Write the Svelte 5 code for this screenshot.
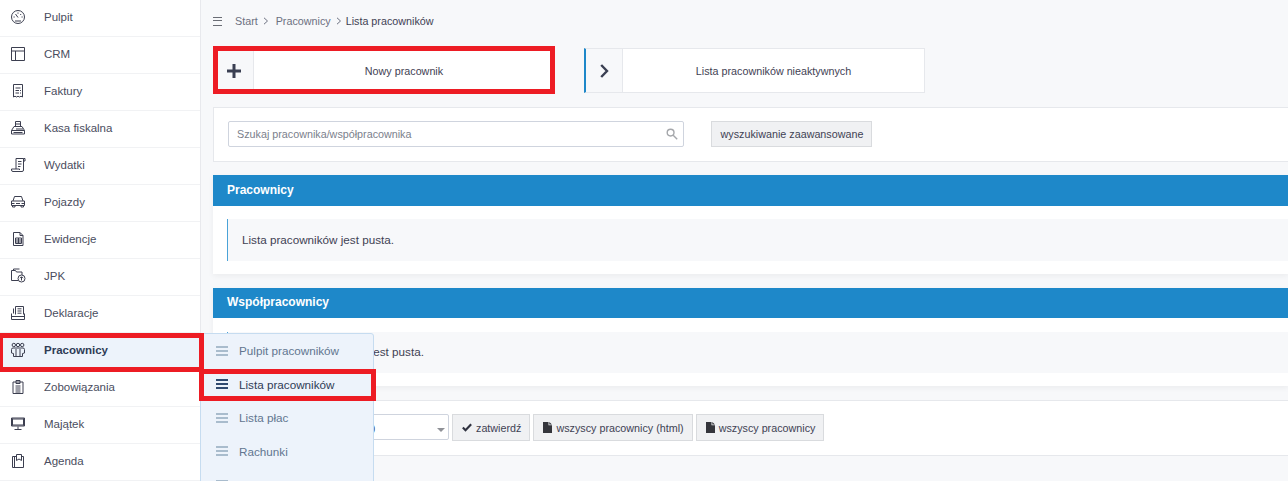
<script>
	const menu = [
		{ label: "Pulpit", icon: ["M14.5 8a6.5 6.5 0 1 1-13 0a6.5 6.5 0 1 1 13 0z", "M8 8.5L5.5 5", "M3.5 8h1.2M11.5 8h1.2M8 3.5v1.2M11.2 5l-1 1", "M5 12h6"] },
		{ label: "CRM", icon: ["M1.5 1.5h13v13h-13z", "M1.5 5h13", "M5.5 5v9.5"] },
		{ label: "Faktury", icon: ["M3.5 1.5h9v12.5l-1.5-.8-1.5.8-1.5-.8-1.5.8-1.5-.8-1.5.8z", "M5.5 5h5", "M5.5 7.5h3.5M10 7.5h1", "M5.5 10h3.5M10 10h1"] },
		{ label: "Kasa fiskalna", icon: ["M1.5 10.5h13v3.5h-13z", "M1.5 10.5L4 6.5h8l2.5 4", "M5.5 6.5v-5h5v5", "M5.5 4h5", "M6 9h7", "M3.5 12.5h9"] },
		{ label: "Wydatki", icon: ["M6 12V1.5h7.5v11.5a1.5 1.5 0 0 1-1.5 1.5H3a1.5 1.5 0 0 1-1.5-1.5V12h8v1", "M13.5 1.5H15v2.5h-1.5", "M8 4.5h3.5M8 7h3.5M8 9.5h2.5"] },
		{ label: "Pojazdy", icon: ["M3 7l1.5-4.5h7L13 7", "M1.5 7h13v4.5h-13z", "M2.5 11.5V13H5v-1.5M11 11.5V13h2.5v-1.5", "M1.5 9.5h3M11.5 9.5h3M6 9.5h4"] },
		{ label: "Ewidencje", icon: ["M3.5 1.5H10l3 3v10H3.5z", "M10 1.5v3h3", "M5.5 7h6v5.5h-6z", "M5.5 9h6M5.5 11h6M8.5 7v5.5"] },
		{ label: "JPK", icon: ["M8 12.5H1.5v-10h4l1 1.5h5.5v3", "M3.5 2.5V1h6", "M15 10.5a3.5 3.5 0 1 1-7 0a3.5 3.5 0 1 1 7 0z", "M11.5 12.5V9M10 10.2l1.5-1.5 1.5 1.5"] },
		{ label: "Deklaracje", icon: ["M5.5 9.5V1.5h8v8", "M3.5 3.5v5", "M7.5 3.8h4M7.5 6h4M7.5 8.2h4", "M1.5 8.5v6h13v-6", "M1.5 11.5h13"] },
		{ label: "Pracownicy", active: true, icon: ["M5.5 3a1.7 1.7 0 1 1-3.4 0a1.7 1.7 0 1 1 3.4 0z", "M9.7 3a1.7 1.7 0 1 1-3.4 0a1.7 1.7 0 1 1 3.4 0z", "M13.9 3a1.7 1.7 0 1 1-3.4 0a1.7 1.7 0 1 1 3.4 0z", "M1.5 11V7.5A1.5 1.5 0 0 1 3 6h10a1.5 1.5 0 0 1 1.5 1.5V11l-2 .5V14.5h-9V11.5z", "M6 7v7.5M10 7v7.5"] },
		{ label: "Zobowiązania", icon: ["M3 3h10v11.5H3z", "M6 1.5h4v3H6z", "M5.5 7h5M5.5 9h5M5.5 11h5M5.5 13h5"] },
		{ label: "Majątek", icon: ["M1.5 2h13v8h-13z", "M1.5 3h13M1.5 9h13M2.5 2.5v7M13.5 2.5v7", "M8 10.5V13", "M4.5 13.5h7"] },
		{ label: "Agenda", icon: ["M6.5 3.5h-4v11h11v-11h-2", "M4.5 3.5v11", "M6.5 1.5h5v6L9 6 6.5 7.5z"] }
	];

	const submenu = [
		{ label: "Pulpit pracowników" },
		{ label: "Lista pracowników", active: true },
		{ label: "Lista płac" },
		{ label: "Rachunki" },
		{ label: "Noty" }
	];
</script>

<div class="app">
	<aside class="sidebar">
		<ul>
			{#each menu as item}
				<li class:active={item.active}>
					<svg class="icon" viewBox="0 0 16 16" width="16" height="16">
						{#each item.icon as d}
							<path {d} />
						{/each}
					</svg>
					<span>{item.label}</span>
					{#if item.active}
						<div class="popup">
							{#each submenu as sub}
								<div class="sub" class:on={sub.active}>
									<i class="burger"></i>
									<span>{sub.label}</span>
									{#if sub.active}<b class="mark mark-sub"></b>{/if}
								</div>
							{/each}
						</div>
						<b class="mark mark-side"></b>
					{/if}
				</li>
			{/each}
		</ul>
	</aside>

	<main>
		<div class="crumbs">
			<i class="burger small"></i>
			<span>Start</span>
			<svg class="sep" viewBox="0 0 6 8" width="6" height="8"><path d="M1 .8L4.5 4 1 7.2" /></svg>
			<span>Pracownicy</span>
			<svg class="sep last" viewBox="0 0 6 8" width="6" height="8"><path d="M1 .8L4.5 4 1 7.2" /></svg>
			<span class="current">Lista pracowników</span>
		</div>

		<div class="actions">
			<a class="action" href="#new">
				<span class="ico">
					<svg viewBox="0 0 14 14" width="14" height="14"><path class="plus" d="M7 0v14M0 7h14" /></svg>
				</span>
				<span class="txt">Nowy pracownik</span>
				<b class="mark mark-action"></b>
			</a>
			<a class="action second" href="#inactive">
				<span class="ico">
					<svg viewBox="0 0 9 14" width="9" height="14"><path class="chev" d="M1.2 1l5.8 6-5.8 6" /></svg>
				</span>
				<span class="txt">Lista pracowników nieaktywnych</span>
			</a>
		</div>

		<section class="bar search">
			<div class="input">
				<span>Szukaj pracownika/współpracownika</span>
				<svg viewBox="0 0 12 12" width="12" height="12">
					<circle cx="4.6" cy="4.6" r="3.4" />
					<path d="M7.2 7.2l4 4" />
				</svg>
			</div>
			<button class="btn advanced">wyszukiwanie zaawansowane</button>
		</section>

		<section class="panel first">
			<h2>Pracownicy</h2>
			<div class="body"><p class="alert">Lista pracowników jest pusta.</p></div>
		</section>

		<section class="panel">
			<h2 class="short">Współpracownicy</h2>
			<div class="body"><p class="alert">Lista współpracowników jest pusta.</p></div>
		</section>

		<section class="bar tools">
			<div class="select"><span>wszyscy pracownicy (pdf)</span><i></i></div>
			<button class="btn">
				<svg viewBox="0 0 12 10" width="10" height="9"><path class="check" d="M1 5l3.2 3.2L11 1.2" /></svg>
				zatwierdź
			</button>
			<button class="btn">
				<svg viewBox="0 0 9 11" width="9" height="11"><path class="file" d="M0 0h5.5v3.2H9V11H0zM6.3 0L9 2.5H6.3z" /></svg>
				wszyscy pracownicy (html)
			</button>
			<button class="btn">
				<svg viewBox="0 0 9 11" width="9" height="11"><path class="file" d="M0 0h5.5v3.2H9V11H0zM6.3 0L9 2.5H6.3z" /></svg>
				wszyscy pracownicy
			</button>
		</section>
	</main>
</div>

<style>
	:global(body) {
		margin: 0;
		font-family: "Liberation Sans", Arial, sans-serif;
		font-size: 11.7px;
		color: #3f4254;
	}

	.app {
		display: flex;
		height: 481px;
		overflow: hidden;
		background: #f7f8fa;
	}

	.sidebar {
		flex: 0 0 200px;
		background: #fff;
		border-right: 1px solid #e8e9ed;
		position: relative;
		z-index: 2;
		font-size: 11.5px;
	}

	ul {
		margin: 0;
		padding: 0;
		list-style: none;
	}

	li {
		position: relative;
		display: flex;
		align-items: center;
		height: 34px;
		padding: 0 0 2px 10px;
		border-bottom: 1px solid #f1f2f4;
	}

	li > span {
		margin-left: 18px;
		color: #4a4d5e;
	}

	li.active {
		background: #edf3fb;
	}

	li.active > span {
		font-weight: 700;
		color: #2f3c56;
	}

	.icon {
		flex: none;
		fill: none;
		stroke: #3c3f50;
		stroke-width: 1;
	}

	.popup {
		position: absolute;
		left: 200px;
		top: 0;
		width: 172px;
		height: 160px;
		background: #edf3fb;
		border: 1px solid #c6dcf0;
		border-radius: 0 3px 0 0;
		font-size: 11.7px;
	}

	.sub {
		position: relative;
		display: flex;
		align-items: center;
		height: 33.5px;
		padding-left: 15px;
		color: #627690;
	}

	.sub span {
		margin-left: 11px;
	}

	.sub.on {
		color: #2f3c56;
	}

	.burger {
		display: block;
		flex: none;
		width: 12px;
		height: 10px;
		border-top: 2px solid #a9bccd;
		border-bottom: 2px solid #a9bccd;
		position: relative;
		box-sizing: border-box;
	}

	.burger::after {
		content: "";
		position: absolute;
		left: 0;
		right: 0;
		top: 2px;
		height: 2px;
		background: #a9bccd;
	}

	.on .burger {
		border-color: #2f4a70;
	}

	.on .burger::after {
		background: #2f4a70;
	}

	.burger.small {
		width: 9px;
		height: 9px;
		margin-right: 13px;
		border-width: 1.5px;
		border-color: #6a6d75;
	}

	.burger.small::after {
		top: 2px;
		height: 1.5px;
		background: #6a6d75;
	}

	/* red annotation frames from the screenshot */
	.mark {
		position: absolute;
		border: 5px solid #ed1c24;
		box-sizing: border-box;
		pointer-events: none;
	}

	.mark-side {
		left: -2px;
		top: 0;
		width: 206px;
		height: 39px;
	}

	.mark-sub {
		left: -2px;
		top: 1.5px;
		width: 177px;
		height: 32px;
	}

	.mark-action {
		left: -1px;
		right: -1px;
		top: -3px;
		bottom: -2px;
	}

	main {
		flex: 1;
		min-width: 0;
		padding-left: 12px;
	}

	.crumbs {
		display: flex;
		align-items: center;
		height: 42px;
		margin-bottom: 6px;
		font-size: 10.75px;
		color: #6c7080;
	}

	.sep {
		margin: 0 7px 0 5px;
		fill: none;
		stroke: #6c7080;
	}

	.sep.last {
		margin-right: 4px;
	}

	.current {
		color: #3f4254;
	}

	.actions {
		display: flex;
		gap: 29px;
		margin-bottom: 14px;
	}

	.action {
		position: relative;
		display: flex;
		width: 342px;
		height: 45px;
		box-sizing: border-box;
		background: #fff;
		border: 1px solid #e6e8ec;
		color: #3f4254;
		font-size: 10.75px;
		text-decoration: none;
	}

	.action.second {
		width: 341px;
		border-left: 2px solid #1e88c9;
	}

	.ico {
		display: flex;
		flex: 0 0 39px;
		align-items: center;
		justify-content: center;
		background: #f7f8fa;
		border-right: 1px solid #e6e8ec;
	}

	.second .ico {
		flex-basis: 36px;
	}

	.txt {
		flex: 1;
		align-self: center;
		text-align: center;
	}

	.plus,
	.chev {
		fill: none;
		stroke: #3a3f52;
		stroke-width: 3;
	}

	.chev {
		stroke-width: 2.4;
	}

	.bar {
		display: flex;
		align-items: flex-start;
		box-sizing: border-box;
		background: #fff;
		border: 1px solid #e6e8ec;
		border-right: 0;
		padding: 13px 0 0 14px;
	}

	.search {
		height: 55px;
		margin-bottom: 13px;
	}

	.input {
		display: flex;
		align-items: center;
		justify-content: space-between;
		box-sizing: border-box;
		width: 456px;
		height: 26px;
		padding: 0 5px 0 8px;
		margin-right: 27px;
		border: 1px solid #cfd4de;
		border-radius: 2px;
		font-size: 10.75px;
		color: #7b7f8c;
	}

	.input svg {
		fill: none;
		stroke: #a5a7ab;
		stroke-width: 1.4;
	}

	.btn {
		display: inline-flex;
		align-items: center;
		gap: 4px;
		height: 27px;
		padding: 0 8px 0 9px;
		box-sizing: border-box;
		background: #f0f1f3;
		border: 1px solid #d9dbde;
		border-radius: 0;
		font: inherit;
		font-size: 10.75px;
		color: #3f4254;
		white-space: nowrap;
	}

	.advanced {
		height: 26px;
		width: 161px;
		justify-content: center;
	}

	.check {
		fill: none;
		stroke: #2f3240;
		stroke-width: 2.6;
	}

	.file {
		fill: #35363c;
	}

	.panel {
		background: #fff;
		margin-bottom: 14px;
		box-shadow: 0 2px 6px rgba(0, 0, 0, 0.05);
	}

	h2 {
		margin: 0;
		height: 31px;
		padding-left: 14px;
		background: #1e88c9;
		color: #fff;
		font-size: 12px;
		font-weight: 700;
		line-height: 30px;
	}

	h2.short {
		height: 30px;
		line-height: 28px;
	}

	.body {
		height: 68px;
		padding: 13px 0 0 14px;
		box-sizing: border-box;
	}

	.short + .body {
		padding-top: 14px;
	}

	.alert {
		display: flex;
		align-items: center;
		height: 40px;
		margin: 0;
		padding: 0 0 2px 14px;
		background: #f7f8fa;
		border-left: 1px solid #4aa3d8;
		color: #3f4254;
	}

	.short + .body .alert {
		height: 39px;
	}

	.tools {
		height: 56px;
		gap: 3px;
	}

	.select {
		position: relative;
		display: flex;
		align-items: center;
		box-sizing: border-box;
		width: 221px;
		height: 26px;
		padding-left: 14px;
		border: 1px solid #cfd4de;
		border-radius: 2px;
		color: #3f4254;
	}

	.select i {
		position: absolute;
		right: 3px;
		top: 13px;
		border: 4px solid transparent;
		border-top: 4px solid #8f9197;
		border-bottom: 0;
	}
</style>
